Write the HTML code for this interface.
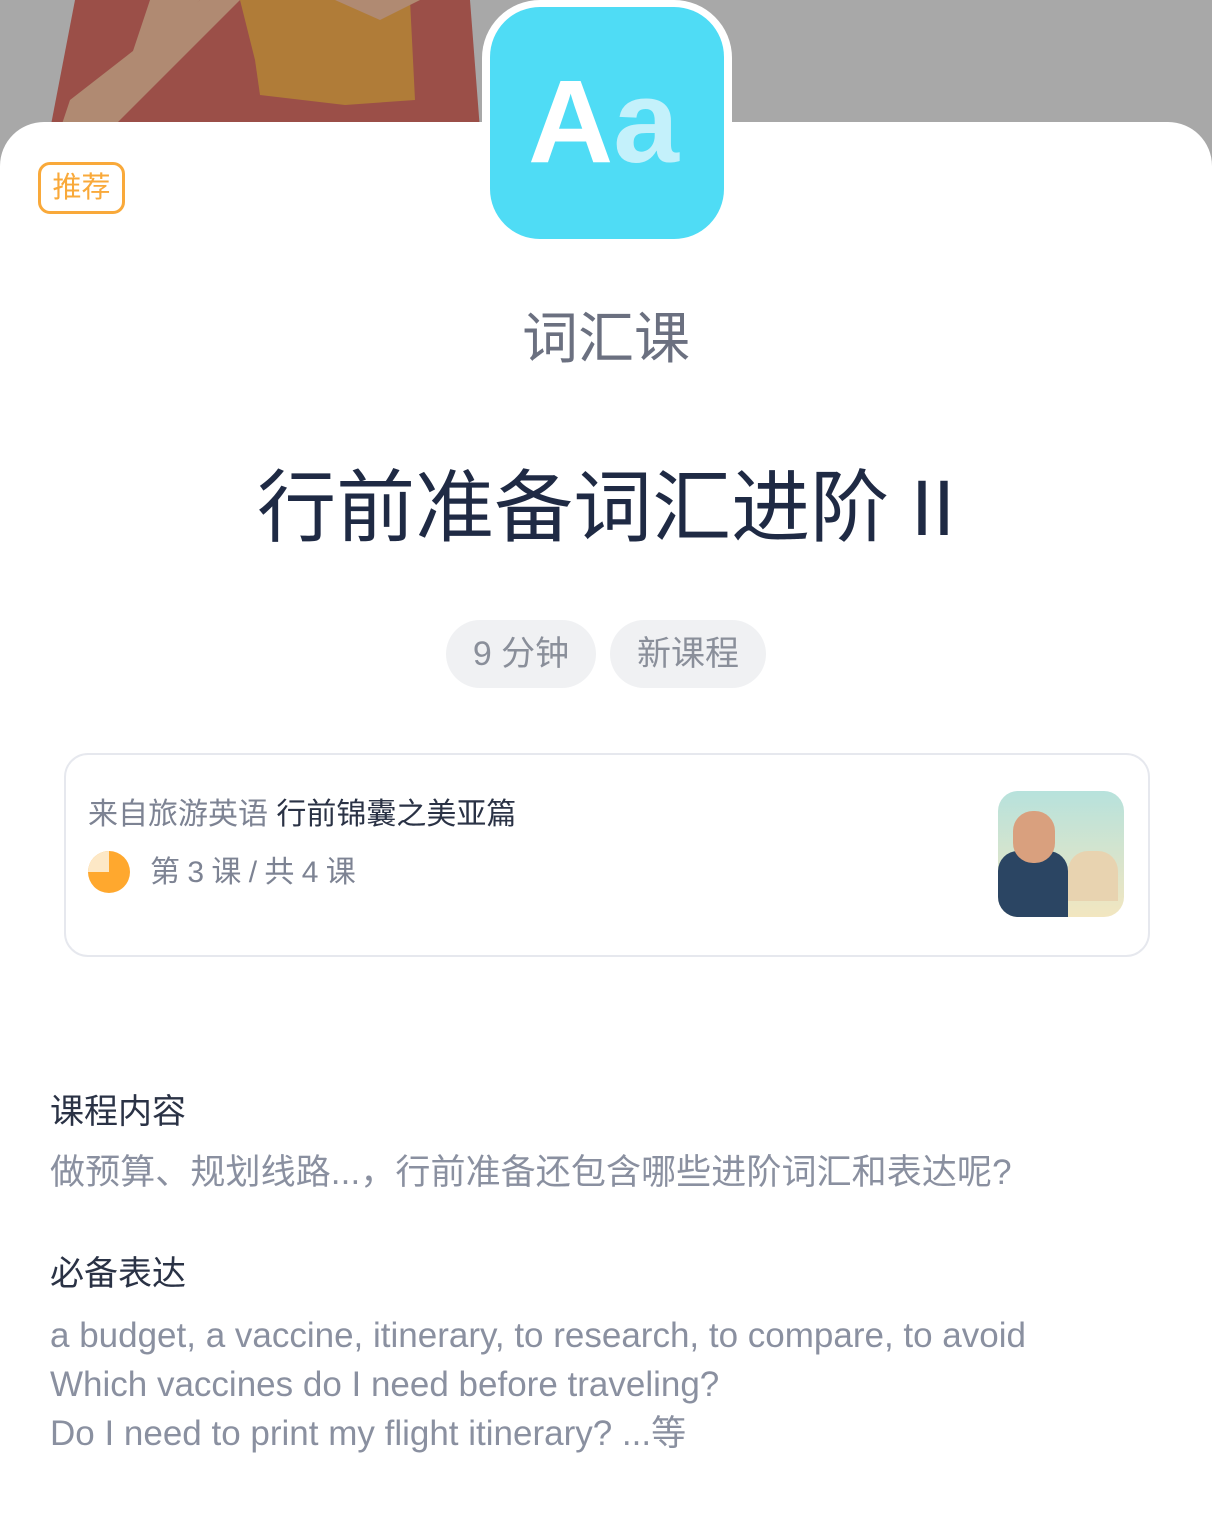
<!DOCTYPE html>
<html><head><meta charset="utf-8"><style>
*{margin:0;padding:0;box-sizing:border-box}
body{width:1212px;height:1479px;overflow:hidden;background:#fff;font-family:"Liberation Sans","Noto Sans CJK SC",sans-serif;position:relative}
.abs{position:absolute}
.top{left:0;top:0;width:1212px;height:170px;background:#a8a8a8}
.card{left:0;top:122px;width:1212px;height:1400px;background:#fff;border-radius:44px 44px 0 0}
.c{left:0;width:1212px;text-align:center;white-space:nowrap}
.pill{top:620px;height:68px;background:#f0f1f3;border-radius:34px;color:#8a8f9a;font-size:34px;line-height:68px;text-align:center}
.h{left:50px;font-size:34px;color:#2a3245;white-space:nowrap}
.p{left:50px;font-size:35px;color:#8a90a0;white-space:nowrap}
</style></head><body>
<div class="abs top"></div>
<svg class="abs" style="left:0;top:0" width="500" height="130">
<path d="M50 130 L75 0 L470 0 L480 130Z" fill="#9b4f48"/>
<path d="M60 130 L70 100 L160 30 L200 0 L240 0 L180 60 L110 130Z" fill="#b08a72"/>
<path d="M240 0 L410 0 L415 100 L345 105 L260 95 L255 60Z" fill="#b07c38"/>
<path d="M150 0 L200 0 L130 60Z" fill="#b08a72"/>
<path d="M335 0 L380 20 L420 0Z" fill="#b08a72"/>
</svg>
<div class="abs card"></div>
<div class="abs" style="left:482px;top:0;width:250px;height:246px;background:#fff;border-radius:58px"></div>
<div class="abs" style="left:490px;top:7px;width:234px;height:232px;background:#4fdcf5;border-radius:50px"></div>
<div class="abs" style="left:528px;top:52px;font-size:118px;font-weight:bold;color:#fff;line-height:140px">A<span style="color:#c4f1fb">a</span></div>
<div class="abs" style="left:38px;top:162px;width:87px;height:52px;border:3px solid #f9a93a;border-radius:12px;color:#f9a93a;font-size:29px;line-height:46px;text-align:center">推荐</div>
<div class="abs c" style="top:304px;font-size:56px;color:#6b7080;line-height:70px">词汇课</div>
<div class="abs c" style="top:458px;font-size:79px;color:#1f2a44;line-height:100px">行前准备词汇进阶 II</div>
<div class="abs pill" style="left:446px;width:150px">9 分钟</div>
<div class="abs pill" style="left:610px;width:156px">新课程</div>
<div class="abs" style="left:64px;top:753px;width:1086px;height:204px;border:2px solid #e6e8ee;border-radius:24px"></div>
<div class="abs" style="left:88px;top:795px;font-size:30px;line-height:40px;color:#7d8393;white-space:nowrap">来自旅游英语 <span style="color:#2a3245">行前锦囊之美亚篇</span></div>
<svg class="abs" style="left:88px;top:851px" width="42" height="42"><circle cx="21" cy="21" r="21" fill="#ffa82e"/><path d="M21 21 L21 0 A21 21 0 0 0 0 21Z" fill="#fde8c6"/></svg>
<div class="abs" style="left:150px;top:852px;font-size:30px;line-height:42px;color:#7d8393;letter-spacing:-0.5px">第 3 课 / 共 4 课</div>
<div class="abs" style="left:998px;top:791px;width:126px;height:126px;border-radius:20px;overflow:hidden;background:linear-gradient(#b7e2dc,#f2e6c0)">
<div class="abs" style="left:0;top:60px;width:70px;height:70px;background:#2b4563;border-radius:20px 20px 0 0"></div>
<div class="abs" style="left:15px;top:20px;width:42px;height:52px;background:#d9a07e;border-radius:20px"></div>
<div class="abs" style="left:70px;top:60px;width:50px;height:50px;background:#e8d3b0;border-radius:20px 20px 0 0"></div>
</div>
<div class="abs h" style="top:1090px;line-height:44px">课程内容</div>
<div class="abs p" style="top:1151px;line-height:44px;letter-spacing:0.1px">做预算、规划线路...，行前准备还包含哪些进阶词汇和表达呢?</div>
<div class="abs h" style="top:1252px;line-height:44px">必备表达</div>
<div class="abs p" style="top:1311px;line-height:49px;letter-spacing:0px">a budget, a vaccine, itinerary, to research, to compare, to avoid<br>Which vaccines do I need before traveling?<br>Do I need to print my flight itinerary? ...等</div>
</body></html>
